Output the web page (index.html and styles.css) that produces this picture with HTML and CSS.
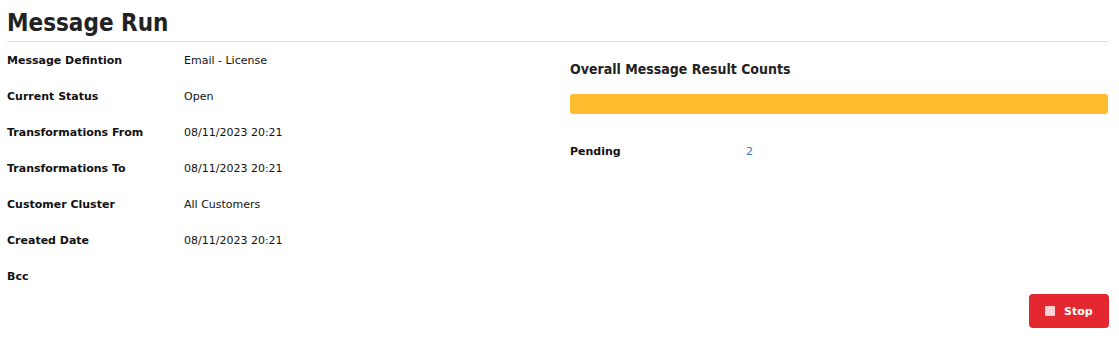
FILE: index.html
```html
<!DOCTYPE html>
<html>
<head>
<meta charset="utf-8">
<link rel="stylesheet" href="styles.css">
</head>
<body>
<div class="page">
  <h1 class="title">Message Run</h1>
  <div class="content">
    <div class="details">
      <div class="row"><span class="label">Message Defintion</span><span class="value">Email - License</span></div>
      <div class="row"><span class="label">Current Status</span><span class="value">Open</span></div>
      <div class="row"><span class="label">Transformations From</span><span class="value">08/11/2023 20:21</span></div>
      <div class="row"><span class="label">Transformations To</span><span class="value">08/11/2023 20:21</span></div>
      <div class="row"><span class="label">Customer Cluster</span><span class="value">All Customers</span></div>
      <div class="row"><span class="label">Created Date</span><span class="value">08/11/2023 20:21</span></div>
      <div class="row"><span class="label">Bcc</span><span class="value"></span></div>
    </div>
    <div class="results">
      <h2 class="results-title">Overall Message Result Counts</h2>
      <div class="bar"></div>
      <div class="count-row"><span class="count-label">Pending</span><span class="count-value">2</span></div>
    </div>
  </div>
  <div class="actions">
    <button class="stop-btn"><span class="stop-icon"></span>Stop</button>
  </div>
</div>
</body>
</html>
```
FILE: styles.css
```css
* { box-sizing: border-box; }
body {
  margin: 0;
  background: #fff;
  font-family: "DejaVu Sans", Verdana, sans-serif;
  color: #111;
}
.page {
  padding: 9px 11px 0 7px;
}
.title {
  margin: 0;
  font-family: "DejaVu Sans Condensed", "DejaVu Sans", sans-serif;
  font-size: 24px;
  font-weight: bold;
  color: #222;
  line-height: 28px;
  padding-bottom: 4px;
  border-bottom: 1px solid #ddd;
}
.content {
  display: grid;
  grid-template-columns: 563px 1fr;
}
.details {
  padding-top: 12px;
}
.row {
  display: flex;
  height: 36px;
  font-size: 11px;
}
.label {
  width: 177px;
  font-weight: bold;
  color: #111;
}
.value {
  color: #111;
}
.results {
  padding-top: 18px;
}
.results-title {
  margin: 0;
  font-family: "DejaVu Sans Condensed", "DejaVu Sans", sans-serif;
  font-size: 14px;
  font-weight: bold;
  color: #222;
  line-height: 18px;
}
.bar {
  margin-top: 16px;
  height: 20px;
  background: #ffbc2f;
  border-radius: 3px;
}
.count-row {
  display: flex;
  margin-top: 31px;
  font-size: 11px;
}
.count-label {
  width: 176px;
  font-weight: bold;
}
.count-value {
  color: #2a7fc9;
}
.actions {
  display: flex;
  justify-content: flex-end;
  margin-top: -12px;
}
.stop-btn {
  display: flex;
  align-items: center;
  gap: 9px;
  width: 80px;
  height: 34px;
  margin-right: -1px;
  padding: 0 0 0 16px;
  background: #e5282f;
  color: #fff;
  border: none;
  border-radius: 4px;
  font-family: "DejaVu Sans", Verdana, sans-serif;
  font-size: 11px;
  font-weight: bold;
}
.stop-icon {
  width: 10px;
  height: 10px;
  background: #fcd3d5;
  border-radius: 1px;
}
```
